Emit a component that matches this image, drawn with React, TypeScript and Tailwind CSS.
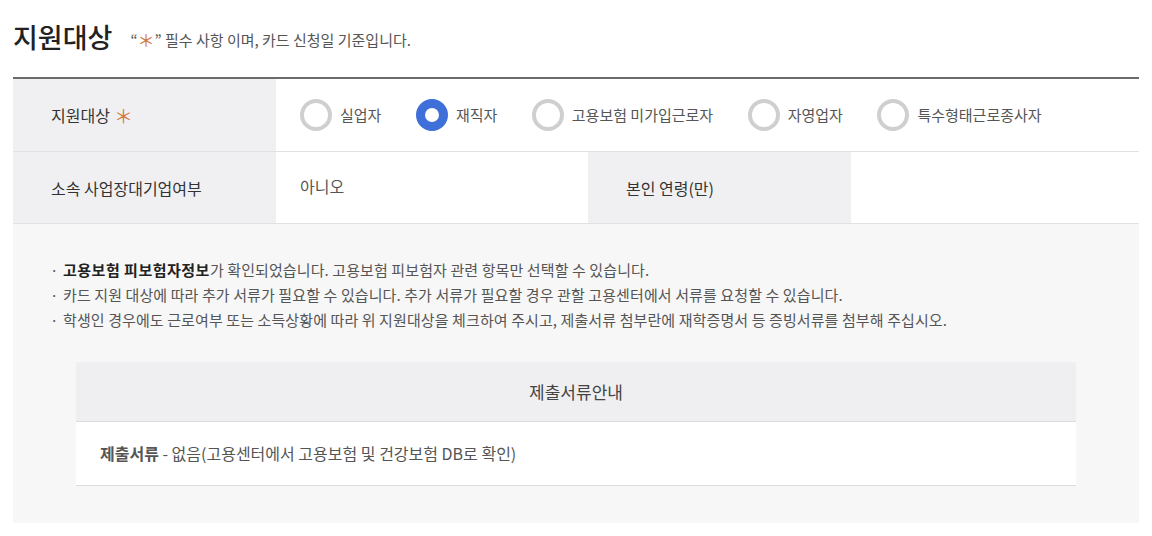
import { useState } from 'react';

const FONT = { fontFamily: '"Noto Sans CJK KR", "Noto Sans", sans-serif' };

const TARGETS = ['실업자', '재직자', '고용보험 미가입근로자', '자영업자', '특수형태근로종사자'];

function Radio({ label, checked, onClick }: { label: string; checked: boolean; onClick: () => void }) {
  return (
    <button type="button" onClick={onClick} className="flex items-center gap-[8px] mr-[34.5px]">
      <span
        className={
          checked
            ? 'w-[32px] h-[32px] rounded-full border-[9px] border-[#3f6fd8] bg-white'
            : 'w-[32px] h-[32px] rounded-full border-[4px] border-[#cfcfcf] bg-white'
        }
      />
      <span className="text-[15px] text-[#555]">{label}</span>
    </button>
  );
}

export default function App() {
  const [target, setTarget] = useState('재직자');

  return (
    <div className="w-[1152px] h-[536px] bg-white px-[13px] pt-[14px] text-[#333]" style={FONT}>
      <div className="flex items-center h-[44px]">
        <h2 className="text-[27px] font-medium text-[#222] leading-none">지원대상</h2>
        <p className="ml-[18px] mt-[6px] flex items-center text-[15px] text-[#555] leading-none">
          “<span className="text-[#d2793c] text-[17px] leading-none">＊</span>” 필수 사항 이며, 카드 신청일 기준입니다.
        </p>
      </div>

      <div className="mt-[19px] border-t-2 border-[#6b6b6b]">
        <div className="flex h-[73px] border-b border-[#e2e2e2]">
          <div className="w-[263px] bg-[#f0f0f2] flex items-center pl-[38px] text-[16px] text-[#333]">
            지원대상 <span className="ml-[4px] text-[#d2793c] text-[19px] leading-none">＊</span>
          </div>
          <div className="flex-1 flex items-center pl-[24px]">
            {TARGETS.map((t) => (
              <Radio key={t} label={t} checked={target === t} onClick={() => setTarget(t)} />
            ))}
          </div>
        </div>
        <div className="flex h-[72px] border-b border-[#e2e2e2]">
          <div className="w-[263px] bg-[#f0f0f2] flex items-center pl-[38px] text-[16px] text-[#333]">
            소속 사업장대기업여부
          </div>
          <div className="w-[312px] flex items-center pl-[24px] pb-[4px] text-[16px] text-[#555]">아니오</div>
          <div className="w-[263px] bg-[#f0f0f2] flex items-center pl-[38px] text-[16px] text-[#333]">
            본인 연령(만)
          </div>
          <div className="flex-1" />
        </div>
      </div>

      <div className="bg-[#f7f7f7] h-[299px] pt-[33px] px-[37px]">
        <ul className="text-[15px] text-[#555] leading-[25px] tracking-[0.1px]">
          <li className="flex">
            <span className="w-[13px]">·</span>
            <span>
              <strong className="font-bold text-[#222] tracking-[0.5px]">고용보험 피보험자정보</strong>가 확인되었습니다. 고용보험 피보험자 관련 항목만 선택할 수 있습니다.
            </span>
          </li>
          <li className="flex">
            <span className="w-[13px]">·</span>
            <span>카드 지원 대상에 따라 추가 서류가 필요할 수 있습니다. 추가 서류가 필요할 경우 관할 고용센터에서 서류를 요청할 수 있습니다.</span>
          </li>
          <li className="flex">
            <span className="w-[13px]">·</span>
            <span>학생인 경우에도 근로여부 또는 소득상황에 따라 위 지원대상을 체크하여 주시고, 제출서류 첨부란에 재학증명서 등 증빙서류를 첨부해 주십시오.</span>
          </li>
        </ul>

        <div className="mt-[30px] mx-[26px] w-[1000px]">
          <div className="h-[60px] bg-[#efeff1] border-b border-[#dcdcdc] flex items-center justify-center text-[17px] text-[#444]">
            제출서류안내
          </div>
          <div className="h-[64px] bg-white border-b border-[#dcdcdc] flex items-center pl-[24px] pb-[2px] text-[16px] text-[#555]">
            <strong className="font-bold text-[#555]">제출서류</strong>&nbsp;- 없음(고용센터에서 고용보험 및 건강보험 DB로 확인)
          </div>
        </div>
      </div>
    </div>
  );
}
